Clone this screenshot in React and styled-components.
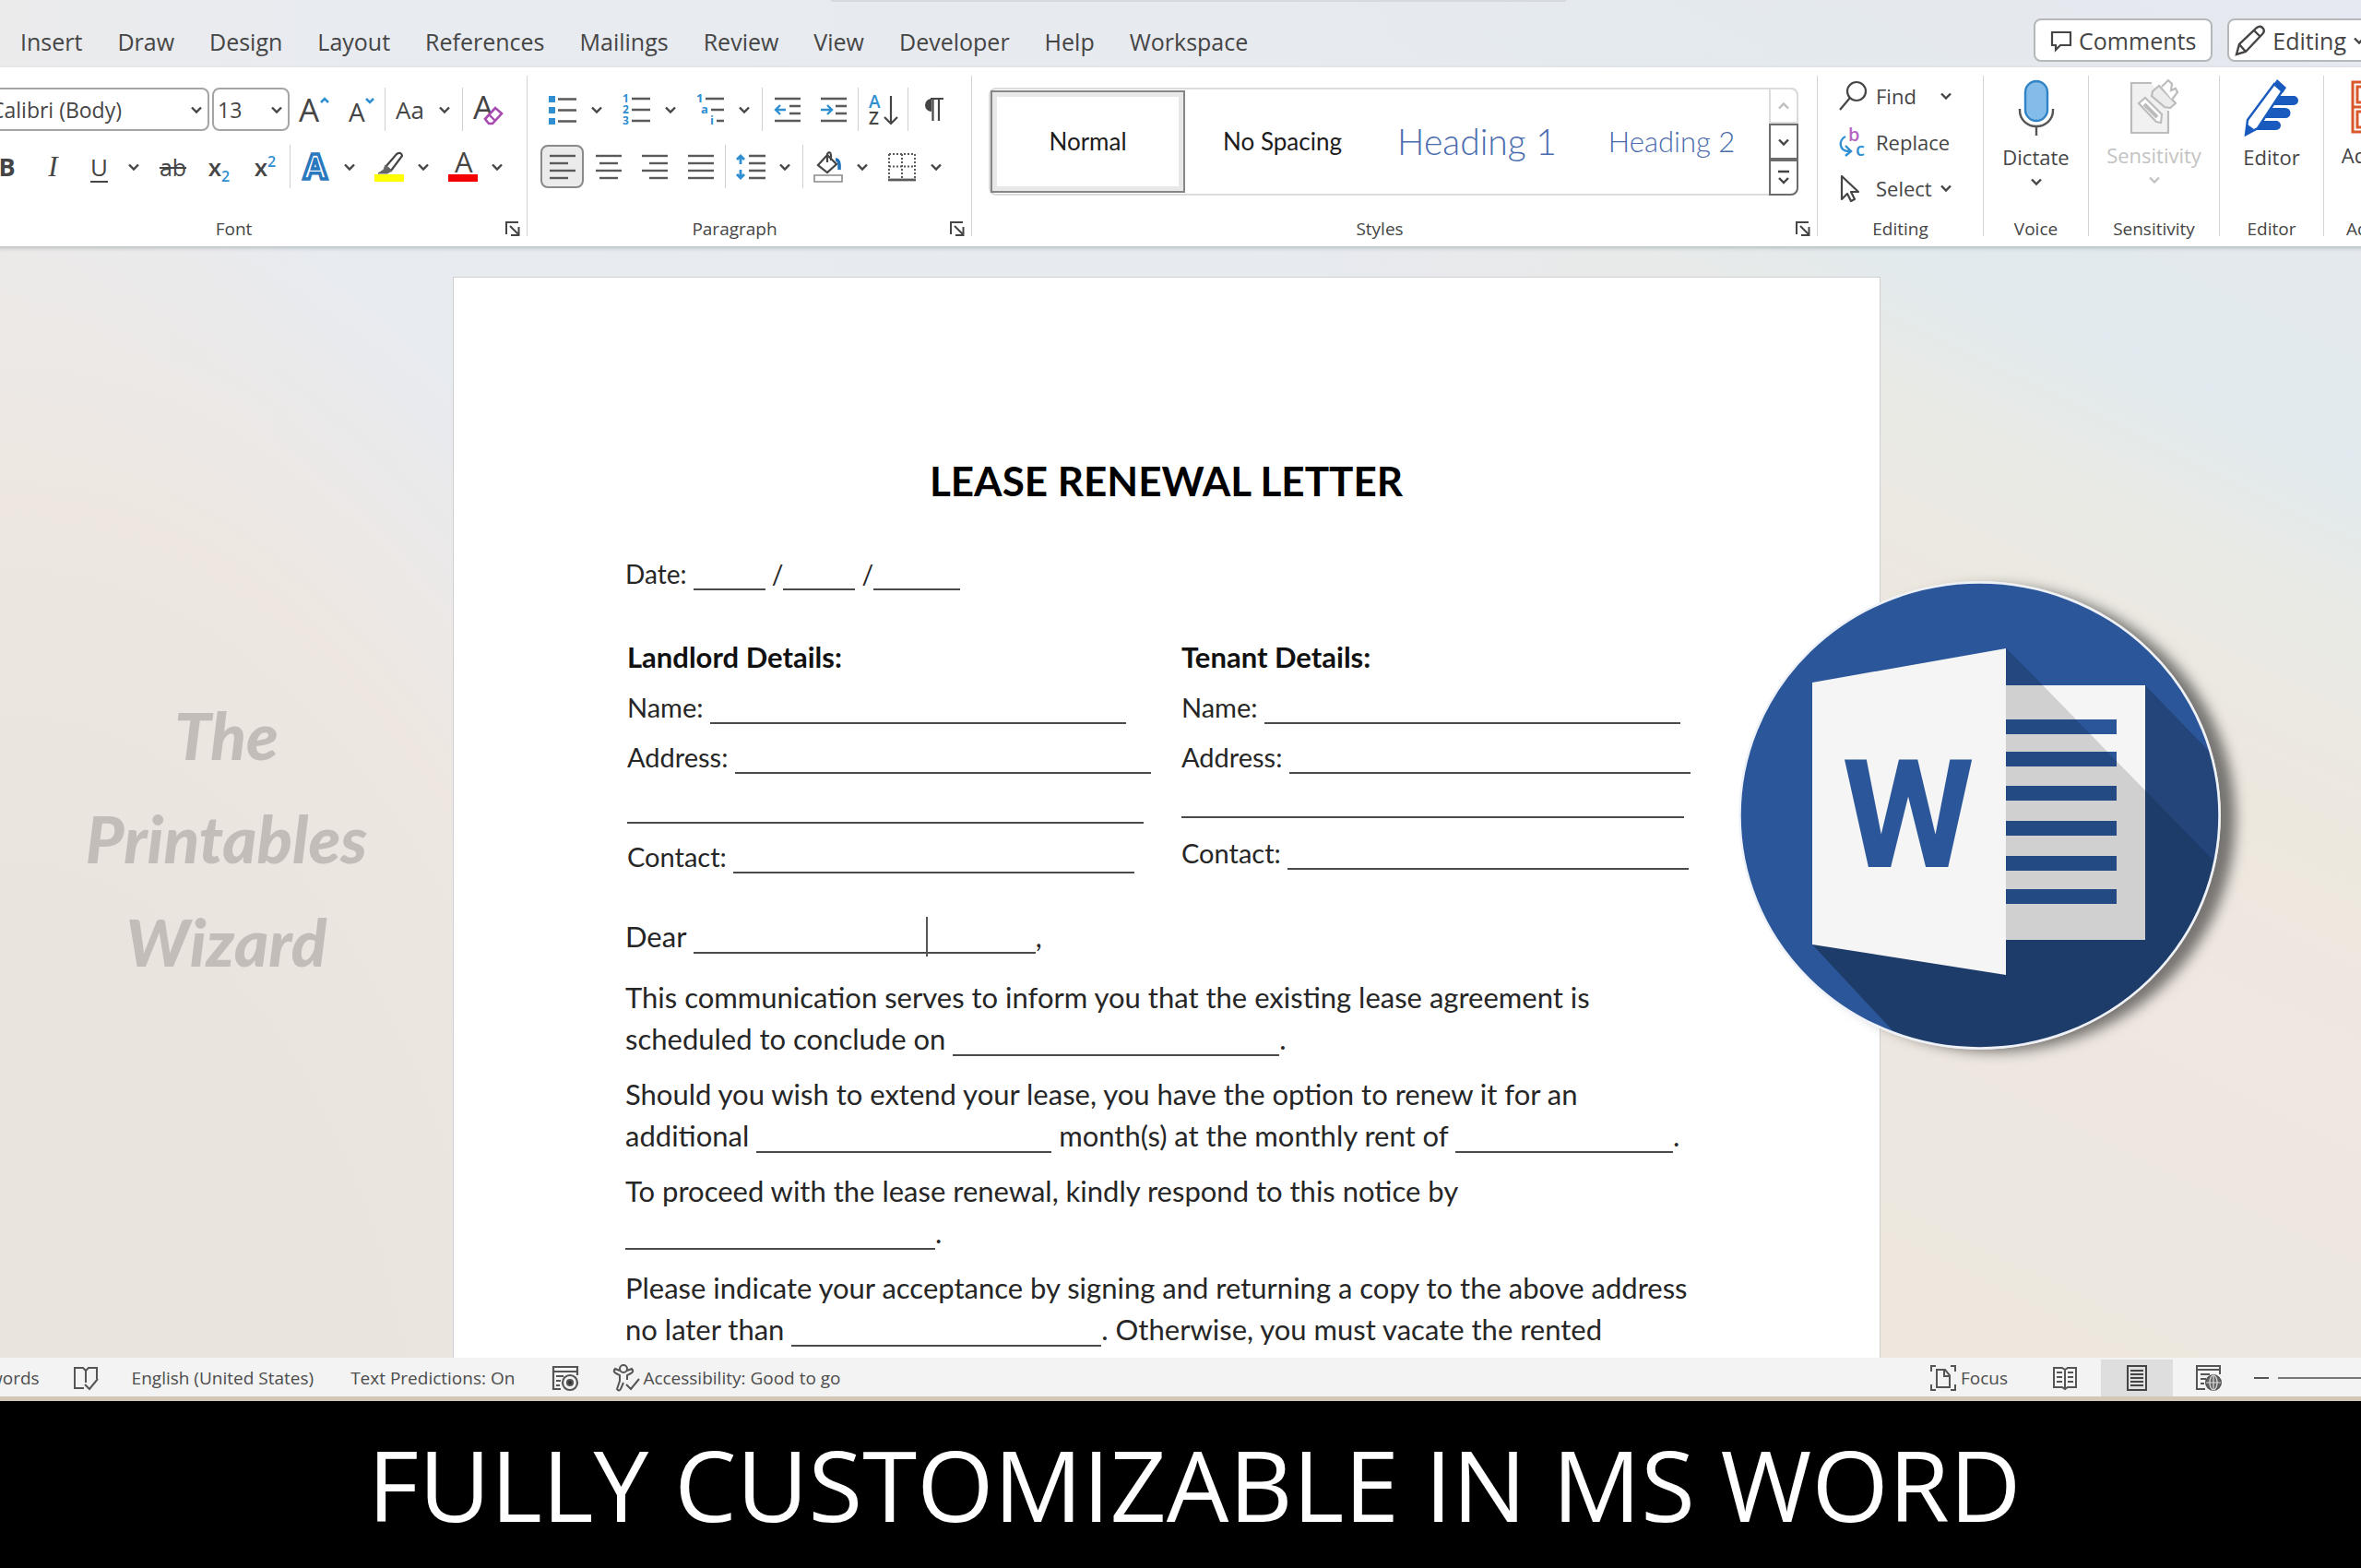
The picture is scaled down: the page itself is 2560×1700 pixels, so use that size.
import React from 'react';
import styled, { createGlobalStyle, css } from 'styled-components';

const ui = "'Open Sans', 'Noto Sans', sans-serif";
const letter = "Lato, 'Liberation Sans', sans-serif";
const ink = '#454545';
const blue = '#2f8fd0';

const GlobalStyle = createGlobalStyle`
  * { box-sizing: border-box; }
  body { margin: 0; font-family: ${ui}; color: ${ink}; }
  button, select { font: inherit; color: inherit; }
  button { background: none; border: 0; padding: 0; }
  svg { display: block; flex: none; overflow: visible; }
`;

const Shell = styled.div`
  height: 100vh;
  display: flex;
  flex-direction: column;
  overflow: hidden;
  background:
    radial-gradient(ellipse 36% 90% at 0 100%, #e9e4de 0%, #e9e4de 45%, #eee7e1 76%, rgba(236, 235, 233, 0) 100%),
    linear-gradient(90deg, #ebebec 0%, #e8ebf0 14%, #e7eaef 56%, rgba(230, 234, 239, 0) 79%),
    linear-gradient(206deg, #e6e9f1 0%, #e5e9ee 8%, #e1eaee 17%, #e9eae5 23%, #ede8df 30%, #efe7e0 41%, #ece7df 49%, #efe6dc 70%);
`;

/* tab row */

const TabBar = styled.header`
  position: relative;
  flex: none;
  height: 73px;
  display: flex;
  align-items: center;
  padding: 0 0 0 22px;
  margin-right: -13px;
  font-size: 25px;
`;

const SearchEdge = styled.div`
  position: absolute;
  top: 0;
  left: 35%;
  right: 34%;
  height: 2px;
  background: #d6dae0;
`;

const Tabs = styled.nav`
  display: flex;
  gap: 38px;
  padding-bottom: 2px;
  margin-top: 18px;
`;

const Tab = styled.button`
  line-height: 34px;
`;

const TopActions = styled.div`
  display: flex;
  gap: 16px;
  margin: 14px 0 0 auto;
`;

const ActionButton = styled.button`
  height: 47px;
  display: flex;
  align-items: center;
  gap: 7px;
  padding: 0 ${(p) => p.$pad || 16}px;
  background: #fff;
  border: 2px solid #b5b8ba;
  border-radius: 8px;
`;

/* ribbon */

const Ribbon = styled.section`
  flex: none;
  height: 194px;
  display: flex;
  margin: 0 -75px 0 -32px;
  background: #fff;
  box-shadow: 0 2px 4px rgba(90, 105, 110, 0.35);
  position: relative;
`;

const Divider = styled.div`
  flex: none;
  width: 1px;
  margin: 9px 0 11px;
  background: #d4d4d4;
`;

const Group = styled.div`
  flex: ${(p) => (p.$grow ? '1 1 0' : `0 0 ${p.$width}px`)};
  min-width: 0;
  display: flex;
  flex-direction: column;
  justify-content: space-between;
  padding: ${(p) => p.$top ?? 22}px 0 7px;
`;

const Rows = styled.div`
  display: flex;
  flex-direction: column;
  gap: 15px;
  padding-left: ${(p) => p.$left ?? 16}px;
`;

const Row = styled.div`
  display: flex;
  align-items: center;
  gap: 3px;
  height: 47px;
`;

const Footer = styled.div`
  display: flex;
  align-items: center;
  height: 24px;
  padding-right: ${(p) => (p.$launcher ? 7 : 0)}px;
  font-size: 19px;
`;

const GroupName = styled.span`
  flex: 1;
  text-align: center;
  white-space: nowrap;
`;

const Launcher = styled.button`
  padding-left: 9px;
`;

const Tool = styled.button`
  width: 47px;
  height: 47px;
  flex: none;
  display: flex;
  align-items: center;
  justify-content: center;
  border-radius: 8px;
  ${(p) =>
    p.$on &&
    css`
      background: #ebebeb;
      border: 2px solid #8a8a8a;
    `}
`;

const Split = styled.div`
  display: flex;
  align-items: center;
  margin-right: 2px;
`;

const Arrow = styled.button`
  width: 28px;
  height: 47px;
  display: flex;
  align-items: center;
  justify-content: center;
`;

const Sep = styled.div`
  width: 1px;
  height: 47px;
  background: #cfcfcf;
`;

const Combo = styled.label`
  width: ${(p) => p.$width}px;
  height: 47px;
  display: flex;
  align-items: center;
  padding: 0 5px 0 4px;
  border: 2px solid #a5a5a5;
  border-radius: 8px;
  background: #fff;
  font-size: 23px;

  select {
    flex: 1;
    min-width: 0;
    padding: 0;
    border: 0;
    background: none;
    appearance: none;
    outline: none;
  }
`;

const Glyph = styled.span`
  font-size: ${(p) => p.$size || 28}px;
  line-height: 36px;
  font-weight: ${(p) => p.$weight || 400};
  font-style: ${(p) => (p.$italic ? 'italic' : 'normal')};
  font-family: ${(p) => (p.$serif ? "'Liberation Serif', serif" : 'inherit')};
  text-decoration: ${(p) => p.$line || 'none'};
  text-decoration-thickness: 2px;
  text-underline-offset: 5px;

  sub, sup {
    font-size: 16px;
    line-height: 0;
    font-weight: 600;
    color: ${blue};
  }
`;

/* styles gallery */

const Gallery = styled.div`
  height: 117px;
  margin: 0 20px 0 18px;
  display: flex;
  border: 2px solid #dcdcdc;
  border-radius: 8px;
`;

const StyleCells = styled.div`
  flex: 1;
  display: grid;
  grid-template-columns: repeat(4, 1fr);
  padding: 1px 0;
`;

const StyleCell = styled.button`
  padding-bottom: 2px;
  font-family: ${letter};
  font-size: ${(p) => p.$size || 26}px;
  font-weight: ${(p) => p.$weight || 400};
  color: ${(p) => p.$color || '#1c1c1c'};
  white-space: nowrap;
  ${(p) =>
    p.$on &&
    css`
      border: 2px solid #868686;
      box-shadow: inset 0 0 0 5px #e8e8e8;
    `}
`;

const Scroller = styled.div`
  width: 32px;
  display: grid;
  grid-template-rows: 1fr 1fr 1fr;
  margin: -2px -2px -2px 0;
`;

const ScrollButton = styled.button`
  display: flex;
  align-items: center;
  justify-content: center;
  border: 2px solid ${(p) => (p.$off ? '#dcdcdc' : '#6c6c6c')};
  border-radius: ${(p) => (p.$last ? '0 0 8px 0' : p.$off ? '0 8px 0 0' : 0)};
  color: ${(p) => (p.$off ? '#bdbdbd' : ink)};
`;

/* editing column and the tall buttons */

const EditList = styled.div`
  display: flex;
  flex-direction: column;
  padding-left: 22px;
`;

const EditButton = styled.button`
  height: 50px;
  display: grid;
  grid-template-columns: 32px ${(p) => (p.$plain ? 'auto' : '60px')} 1fr;
  align-items: center;
  column-gap: 9px;
  font-size: 22px;
  text-align: left;
  white-space: nowrap;
`;

const TallButton = styled.button`
  display: flex;
  flex-direction: column;
  align-items: center;
  gap: 6px;
  font-size: 22px;
  line-height: 32px;
  white-space: nowrap;
  color: ${(p) => (p.$off ? '#c3c3c3' : ink)};
`;

/* document */

const Workspace = styled.main`
  position: relative;
  flex: 1;
  min-height: 0;
  display: grid;
  grid-template-columns: 491fr 1548fr 521fr;
  overflow: hidden;
`;

const Watermark = styled.aside`
  padding-top: 474px;
  text-align: center;
  font-family: ${letter};
  font-size: 71px;
  font-weight: 900;
  font-style: italic;
  line-height: 112px;
  color: #c3bdb9;
`;

const Page = styled.article`
  margin-top: 33px;
  padding: 190px 171px 0 186px;
  background: #fff;
  border: 1px solid #cfcfd2;
  font-family: ${letter};
  font-size: 31px;
  line-height: 45px;
  color: #262626;
  white-space: nowrap;
`;

const Title = styled.h1`
  margin: 0 16px 49px 0;
  font-size: 44px;
  line-height: 60px;
  text-align: center;
  color: #000;
`;

const DateLine = styled.p`
  margin: 0;
  font-size: 28px;
`;

const Details = styled.div`
  display: grid;
  grid-template-columns: 1fr 1fr;
  margin: 40px -15px 37px 2px;
  font-size: 29px;
  line-height: 54px;
`;

const DetailTitle = styled.h2`
  margin: 0 0 1px;
  font-size: 31px;
  color: #111;
`;

const DetailRow = styled.div`
  height: ${(p) => (p.$short ? 50 : 54)}px;
  line-height: ${(p) => (p.$short ? 42 : 54)}px;
`;

const Paragraph = styled.p`
  margin: 0 0 ${(p) => p.$after ?? 15}px;
`;

const Blank = styled.span`
  display: inline-block;
  position: relative;
  width: ${(p) => p.$width}px;
  height: 28px;
  vertical-align: -7px;
  border-bottom: 2px solid #4a4a4a;
`;

const Caret = styled.span`
  position: absolute;
  left: 68%;
  top: -12px;
  width: 2px;
  height: 43px;
  background: #555;
`;

const WordBadge = styled.div`
  position: absolute;
  top: 363px;
  right: 152px;
  border-radius: 50%;
  box-shadow: 18px 4px 14px -2px rgba(40, 40, 40, 0.6);
`;

/* status bar and caption */

const StatusBar = styled.footer`
  flex: none;
  height: 42px;
  display: flex;
  align-items: center;
  padding-top: 2px;
  background: #f3f3f3;
  font-size: 19px;
  color: #4c4c4c;
  overflow: hidden;
  white-space: nowrap;
`;

const StatusItem = styled.button`
  display: flex;
  align-items: center;
  gap: ${(p) => p.$gap || 0}px;
  margin-left: ${(p) => p.$before || 40}px;
`;

const StatusRight = styled.div`
  display: flex;
  align-items: center;
  height: 100%;
  margin-left: auto;
`;

const ViewButton = styled.button`
  width: 78px;
  height: 100%;
  display: flex;
  align-items: center;
  justify-content: center;
  background: ${(p) => (p.$on ? '#dedede' : 'none')};
`;

const Views = styled.div`
  display: flex;
  height: 100%;
  margin-left: 23px;
`;

const Zoom = styled.div`
  display: flex;
  align-items: center;
  gap: 10px;
  margin-left: 10px;
`;

const ZoomTrack = styled.div`
  width: 90px;
  height: 2px;
  background: #777;
`;

const Caption = styled.div`
  flex: none;
  height: 186px;
  border-top: 5px solid #d3c7b6;
  padding-left: 30px;
  background: #000;
  color: #fff;
  font-family: ${ui};
  font-size: 107px;
  line-height: 179px;
  text-align: center;
  white-space: nowrap;
`;

/* icons */

const Chevron = ({ up }) => (
  <svg width="14" height="10" viewBox="0 0 14 10" fill="none" stroke="currentColor" strokeWidth="2.4">
    <path d={up ? 'M2 7.5 7 2.5l5 5' : 'M2 2.5l5 5 5-5'} />
  </svg>
);

const LauncherIcon = () => (
  <svg width="16" height="16" viewBox="0 0 16 16" fill="none" stroke={ink} strokeWidth="2">
    <path d="M1 14V1h13M5 5l9 9M14.500 6v9H6" />
  </svg>
);

const Lines = ({ rows }) => (
  <svg width="28" height="30" viewBox="0 0 28 30" stroke="#5a5a5a" strokeWidth="2.4">
    {rows.map(([a, b], i) => (
      <path key={i} d={`M${a} ${3 + i * 8}H${b}`} />
    ))}
  </svg>
);

const BulletsIcon = () => (
  <svg width="32" height="32" viewBox="0 0 32 32">
    <path d="M1 1h7v7H1zM1 13h7v7H1zM1 25h7v7H1z" fill={blue} />
    <path d="M11 4.500h20M11 16.500h20M11 28.500h20" stroke="#5a5a5a" strokeWidth="2.4" />
  </svg>
);

const NumbersIcon = () => (
  <svg width="32" height="34" viewBox="0 0 32 34" fontFamily="Open Sans" fontSize="12" fontWeight="700">
    <g fill={blue}>
      <text x="1" y="9">1</text>
      <text x="1" y="21">2</text>
      <text x="1" y="33">3</text>
    </g>
    <path d="M11 5h20M11 17h20M11 29h20" stroke="#5a5a5a" strokeWidth="2.400" />
  </svg>
);

const MultiIcon = () => (
  <svg width="32" height="34" viewBox="0 0 32 34" fontFamily="Open Sans" fontSize="13" fontWeight="700">
    <g fill={blue}>
      <text x="1" y="9">1</text>
      <text x="6" y="21">a</text>
      <text x="16" y="33">i</text>
    </g>
    <path d="M11 5h20M17 17h14M23 29h8" stroke="#5a5a5a" strokeWidth="2.400" />
  </svg>
);

const IndentIcon = ({ right }) => (
  <svg width="30" height="30" viewBox="0 0 30 30" fill="none" stroke="#5a5a5a" strokeWidth="2.400">
    <path d="M1 3h28M17 11h12M17 19h12M1 27h28" />
    <path d={right ? 'M1 15h11M8 10l5 5-5 5' : 'M2 15h11M7 10l-5 5 5 5'} stroke={blue} />
  </svg>
);

const SortIcon = () => (
  <svg width="34" height="36" viewBox="0 0 34 36" fontFamily="Open Sans" fontSize="19" fontWeight="600">
    <text x="1" y="16" fill={blue}>A</text>
    <text x="1" y="34" fill={ink}>Z</text>
    <path d="M25 3v29M18 26l7 7 7-7" fill="none" stroke={ink} strokeWidth="2.200" />
  </svg>
);

const PilcrowIcon = () => (
  <svg width="24" height="28" viewBox="0 0 24 28" fill={ink}>
    <path d="M10 2a7 7 0 0 0 0 14z" />
    <path d="M9 2h14M11.500 2v24M18 2v24" fill="none" stroke={ink} strokeWidth="2.200" />
  </svg>
);

const SpacingIcon = () => (
  <svg width="34" height="30" viewBox="0 0 34 30" fill="none" strokeWidth="2.400">
    <path d="M15 3h18M15 11h18M15 19h18M15 27h18" stroke="#5a5a5a" />
    <path d="M6 3v9M2 7l4-4 4 4M6 18v9M2 23l4 4 4-4" stroke={blue} strokeWidth="2.800" />
  </svg>
);

const BucketIcon = () => (
  <svg width="34" height="34" viewBox="0 0 34 34" fill="none" stroke={ink} strokeWidth="2.200">
    <path d="M6 15 16 4l10 10-10 9zM16 12V3q3-4 4 1v6" />
    <path d="M25 9q5 0 4 11" stroke="#1f6fb5" strokeWidth="3.500" />
    <path d="M2 26h30v7H2z" stroke="#8a8a8a" strokeWidth="1.600" />
  </svg>
);

const BordersIcon = () => (
  <svg width="32" height="32" viewBox="0 0 32 32" fill="none" stroke="#5a5a5a" strokeWidth="2">
    <path d="M2 2h28v27M2 2v27M16 2v27M2 15.500h28" strokeDasharray="2 2" />
    <path d="M1 30h30" strokeWidth="2.800" />
  </svg>
);

const SizeIcon = ({ down }) => (
  <svg width="34" height="34" viewBox="0 0 34 34" fontFamily="Open Sans" fill={ink}>
    <text x={down ? 4 : 0} y="30" fontSize={down ? 28 : 35}>A</text>
    <path d={down ? 'M23 5l4 4 4-4' : 'M24 9l4-4 4 4'} fill="none" stroke={blue} strokeWidth="2.600" />
  </svg>
);

const ClearIcon = () => (
  <svg width="34" height="36" viewBox="0 0 34 36" fontFamily="Open Sans">
    <text x="1" y="28" fontSize="35" fill={ink}>A</text>
    <path d="M14 28 25 16l7 6-10 11h-4z" fill="#fff" stroke="#a849b0" strokeWidth="2.600" />
    <path d="M18 23l7 7" stroke="#a849b0" strokeWidth="2.400" />
  </svg>
);

const EffectsIcon = () => (
  <svg width="36" height="36" viewBox="0 0 36 36" fontFamily="Open Sans" fontSize="37" fontWeight="700">
    <text x="5" y="31" fill="#fff" stroke="#2a78bd" strokeWidth="3.400">A</text>
  </svg>
);

const HighlightIcon = () => (
  <svg width="34" height="34" viewBox="0 0 34 34" fill="none" stroke={ink} strokeWidth="2.200">
    <path d="M13 17 25 3q5-3 6 2L19 21z" />
    <path d="M13 15l-2 5-6 4h10l5-3z" fill="#666" stroke="#666" strokeWidth="1" />
    <path d="M1 25h32v8H1z" fill="#ffff00" stroke="none" />
  </svg>
);

const ColorIcon = () => (
  <svg width="34" height="34" viewBox="0 0 34 34" fontFamily="Open Sans" fontSize="31">
    <text x="8" y="23" fill={ink}>A</text>
    <path d="M1 25h32v8H1z" fill="#f40000" />
  </svg>
);

const FindIcon = () => (
  <svg width="32" height="34" viewBox="0 0 32 34" fill="none" stroke={ink} strokeWidth="2.200">
    <circle cx="20" cy="12" r="10" />
    <path d="M13 19 2 32" />
  </svg>
);

const ReplaceIcon = () => (
  <svg width="30" height="34" viewBox="0 0 30 34" fontFamily="Open Sans" fontSize="20" fontWeight="600">
    <text x="11" y="16" fill="#b765c4">b</text>
    <text x="19" y="32" fill={blue}>c</text>
    <path d="M8 11C0 15 1 27 12 27M8 21l6 6-6 5" fill="none" stroke={blue} strokeWidth="2.400" />
  </svg>
);

const SelectIcon = () => (
  <svg width="26" height="34" viewBox="0 0 26 34" fill="none" stroke={ink} strokeWidth="2.200">
    <path d="M4 4v25l6-6 4 8 4-2-4-8h8z" strokeLinejoin="round" />
  </svg>
);

const MicIcon = () => (
  <svg width="40" height="62" viewBox="0 0 40 62" fill="none" stroke="#555" strokeWidth="2.400">
    <rect x="8" y="2" width="24" height="43" rx="12" fill="#83bce9" stroke="#2f83c6" />
    <path d="M2 32v2a18 17 0 0 0 36 0v-2M20 51v10" />
  </svg>
);

const SensitivityIcon = () => (
  <svg width="54" height="60" viewBox="0 0 54 60" fill="#ececec" stroke="#bcbcbc" strokeWidth="2.200">
    <path d="M24 4H2v54h40V34" fill="#f1f1f1" />
    <path d="M10 26l7-6 18 18-1 9-5-1z" fill="#fff" />
    <path d="M16 27l14 14" strokeWidth="4" />
    <path d="M25 13l7-6 18 19-6 5-6-1-14-12z" />
    <path d="M35 8l7-7 4 4-1 7 5-2 2 4-6 8" fill="#fff" />
  </svg>
);

const EditorIcon = () => (
  <svg width="62" height="62" viewBox="0 0 62 62">
    <path d="M33 18h22a5 5 0 0 1 0 10H28zM27 31h19a5 5 0 0 1 0 11H20zM19 45h17a5 5 0 0 1 0 10H8z" fill="#185abd" />
    <path d="M5 44 34 5l9 7-27 41L3 60z" fill="#fff" stroke="#185abd" strokeWidth="2.400" />
    <path d="M37 0l10 9-4 6-10-9z" fill="#185abd" />
    <path d="M2 61l3-12 7 5z" fill="#185abd" />
  </svg>
);

const AddinsIcon = () => (
  <svg width="58" height="60" viewBox="0 0 58 60" fill="none" stroke="#d9592b" strokeWidth="3">
    <path d="M2 3h24v54H2zM2 30h52v27H2zM7 8h14v17H7zM7 35h14v17H7zM32 14l12-12 12 12-12 12z" />
  </svg>
);

const CommentIcon = () => (
  <svg width="24" height="22" viewBox="0 0 24 22" fill="none" stroke={ink} strokeWidth="2.200">
    <path d="M2 2h20v14H11l-5 5v-5H2z" />
  </svg>
);

const PencilIcon = () => (
  <svg width="34" height="34" viewBox="0 0 34 34" fill="none" stroke={ink} strokeWidth="2.400">
    <path d="M2 32l3-11L24 3q4-3 7 1 2 3-1 6L12 29zM5 21l7 8M21 6l7 7" />
  </svg>
);

const ProofIcon = () => (
  <svg width="28" height="28" viewBox="0 0 28 28" fill="none" stroke="#555" strokeWidth="2">
    <path d="M12 25H2V3h9l3 3 3-3h9v12M14 5v14M13 21l5 5 9-11" />
  </svg>
);

const MacroIcon = () => (
  <svg width="30" height="28" viewBox="0 0 30 28" fill="none" stroke="#555" strokeWidth="2.200">
    <path d="M10 26H2V2h26v9M2 7h26M5 12h8M5 17h5M5 22h4" />
    <circle cx="20" cy="19" r="8" />
    <circle cx="20" cy="19" r="3" fill="#333" />
  </svg>
);

const AccessIcon = () => (
  <svg width="30" height="30" viewBox="0 0 30 30" fill="none" stroke="#555" strokeWidth="2">
    <circle cx="12" cy="5" r="4" />
    <path d="M8 7 3 5q-3 3 1 5l4 2v6L5 27q2 3 4 0l3-7M16 7l5-2q3 3-1 5l-4 2v5M15 22l5 5 9-11" />
  </svg>
);

const FocusIcon = () => (
  <svg width="28" height="30" viewBox="0 0 28 30" fill="none" stroke="#555" strokeWidth="2">
    <path d="M1 8V2h5M22 2h5v6M1 22v6h5M22 28h5v-6M7 6h9l5 6v13H7zM15 6v7h6" />
  </svg>
);

const ReadIcon = () => (
  <svg width="28" height="28" viewBox="0 0 28 28" fill="none" stroke="#555" strokeWidth="2">
    <path d="M2 3h9l3 2 3-2h9v21h-9l-3 2-3-2H2zM14 4v23M5 8h6M5 13h6M5 18h6M17 8h6M17 13h6M17 18h6" />
  </svg>
);

const PrintIcon = () => (
  <svg width="24" height="30" viewBox="0 0 24 30" fill="none" stroke="#444" strokeWidth="2">
    <path d="M2 2h20v26H2zM5 7h14M5 11h14M5 15h14M5 19h14M5 23h14" />
  </svg>
);

const WebIcon = () => (
  <svg width="30" height="30" viewBox="0 0 30 30" fill="none" stroke="#555" strokeWidth="2">
    <path d="M11 27H2V2h25v9M2 6h25M6 11h10M6 16h6M6 21h4" />
    <circle cx="20" cy="20" r="8" fill="#666" />
    <path d="M20 12v16M12 20h16" stroke="#ddd" strokeWidth="1.200" />
    <ellipse cx="20" cy="20" rx="4" ry="8" stroke="#ddd" strokeWidth="1.200" />
  </svg>
);

const WordLogo = () => (
  <svg width="523" height="508" viewBox="0 0 523 508">
    <defs>
      <clipPath id="disc">
        <ellipse cx="261.500" cy="254" rx="260" ry="252.500" />
      </clipPath>
      <clipPath id="sheet">
        <path d="M290 113h151v276H290z" />
      </clipPath>
    </defs>
    <g clipPath="url(#disc)">
      <path d="M0 0h523v508H0z" fill="#2b579a" />
      <path d="M441 113 600 277v300H441z" fill="#234579" />
      <path d="M290 73 330 113 516 304 600 393v180H247L80 394z" fill="#1e3c69" />
      <path d="M290 73l40 40h-40z" fill="#24477f" />
      <path d="M290 113h151v276H290z" fill="#f5f5f5" />
      <g fill="#2b579a">
        {[150, 185, 222, 260, 298, 334].map((y) => (
          <path key={y} d={`M290 ${y}h120v16H290z`} />
        ))}
      </g>
      <path d="M290 73 330 113 441 227 520 310v190H290z" fill="#000" opacity="0.15" clipPath="url(#sheet)" />
      <path d="M80 110 290 73v354L80 394z" fill="#f5f5f5" />
      <text
        x="184"
        y="310"
        textAnchor="middle"
        fontFamily="Roboto, sans-serif"
        fontSize="164"
        fontWeight="700"
        fill="#2b579a"
      >
        W
      </text>
    </g>
    <ellipse cx="261.500" cy="254" rx="260" ry="252.500" fill="none" stroke="#eef2f8" strokeWidth="2.500" />
  </svg>
);

const TABS = ['Insert', 'Draw', 'Design', 'Layout', 'References', 'Mailings', 'Review', 'View', 'Developer', 'Help', 'Workspace'];

const SplitTool = ({ label, children }) => (
  <Split>
    <Tool aria-label={label}>{children}</Tool>
    <Arrow aria-label={`${label} options`}>
      <Chevron />
    </Arrow>
  </Split>
);

const GroupFooter = ({ name, launcher }) => (
  <Footer $launcher={launcher}>
    <GroupName>{name}</GroupName>
    {launcher && (
      <Launcher aria-label={`${name} settings`}>
        <LauncherIcon />
      </Launcher>
    )}
  </Footer>
);

const FontGroup = () => (
  <Group $width={603}>
    <Rows>
      <Row>
        <Combo $width={243}>
          <select aria-label="Font" defaultValue="Calibri (Body)">
            <option>Calibri (Body)</option>
          </select>
          <Chevron />
        </Combo>
        <Combo $width={84}>
          <select aria-label="Font size" defaultValue="13">
            <option>13</option>
          </select>
          <Chevron />
        </Combo>
        <Tool aria-label="Grow font"><SizeIcon /></Tool>
        <Tool aria-label="Shrink font"><SizeIcon down /></Tool>
        <Sep />
        <SplitTool label="Change case"><Glyph $size={26}>Aa</Glyph></SplitTool>
        <Sep />
        <Tool aria-label="Clear formatting"><ClearIcon /></Tool>
      </Row>
      <Row>
        <Tool aria-label="Bold"><Glyph $weight={700} $size={27}>B</Glyph></Tool>
        <Tool aria-label="Italic"><Glyph $serif $italic $size={31}>I</Glyph></Tool>
        <SplitTool label="Underline"><Glyph $line="underline" $size={26}>U</Glyph></SplitTool>
        <Tool aria-label="Strikethrough"><Glyph $line="line-through" $size={25}>ab</Glyph></Tool>
        <Tool aria-label="Subscript"><Glyph $weight={600} $size={26}>x<sub>2</sub></Glyph></Tool>
        <Tool aria-label="Superscript"><Glyph $weight={600} $size={26}>x<sup>2</sup></Glyph></Tool>
        <Sep />
        <SplitTool label="Text effects"><EffectsIcon /></SplitTool>
        <SplitTool label="Highlight"><HighlightIcon /></SplitTool>
        <SplitTool label="Font color"><ColorIcon /></SplitTool>
      </Row>
    </Rows>
    <GroupFooter name="Font" launcher />
  </Group>
);

const ParagraphGroup = () => (
  <Group $width={481}>
    <Rows $left={14}>
      <Row>
        <SplitTool label="Bullets"><BulletsIcon /></SplitTool>
        <SplitTool label="Numbering"><NumbersIcon /></SplitTool>
        <SplitTool label="Multilevel list"><MultiIcon /></SplitTool>
        <Sep />
        <Tool aria-label="Decrease indent"><IndentIcon /></Tool>
        <Tool aria-label="Increase indent"><IndentIcon right /></Tool>
        <Sep />
        <Tool aria-label="Sort"><SortIcon /></Tool>
        <Sep />
        <Tool aria-label="Show marks"><PilcrowIcon /></Tool>
      </Row>
      <Row>
        <Tool $on aria-label="Align left"><Lines rows={[[0, 28], [0, 20], [0, 28], [0, 20]]} /></Tool>
        <Tool aria-label="Center"><Lines rows={[[0, 28], [4, 24], [0, 28], [4, 24]]} /></Tool>
        <Tool aria-label="Align right"><Lines rows={[[0, 28], [8, 28], [0, 28], [8, 28]]} /></Tool>
        <Tool aria-label="Justify"><Lines rows={[[0, 28], [0, 28], [0, 28], [0, 28]]} /></Tool>
        <Sep />
        <SplitTool label="Line spacing"><SpacingIcon /></SplitTool>
        <Sep />
        <SplitTool label="Shading"><BucketIcon /></SplitTool>
        <SplitTool label="Borders"><BordersIcon /></SplitTool>
      </Row>
    </Rows>
    <GroupFooter name="Paragraph" launcher />
  </Group>
);

const StylesGroup = () => (
  <Group $grow>
    <Gallery>
      <StyleCells>
        <StyleCell $on>Normal</StyleCell>
        <StyleCell>No Spacing</StyleCell>
        <StyleCell $size={39} $weight={300} $color="#4a6cae">Heading 1</StyleCell>
        <StyleCell $size={31} $weight={300} $color="#4a6cae">Heading 2</StyleCell>
      </StyleCells>
      <Scroller>
        <ScrollButton $off aria-label="Previous styles"><Chevron up /></ScrollButton>
        <ScrollButton aria-label="Next styles"><Chevron /></ScrollButton>
        <ScrollButton $last aria-label="More styles">
          <svg width="14" height="18" viewBox="0 0 14 18" fill="none" stroke="currentColor" strokeWidth="2.400">
            <path d="M1 2h12M2 9l5 5 5-5" />
          </svg>
        </ScrollButton>
      </Scroller>
    </Gallery>
    <GroupFooter name="Styles" launcher />
  </Group>
);

const Blanks = ({ address, last, short }) => (
  <>
    <DetailRow>Name: <Blank $width={451} /></DetailRow>
    <DetailRow>Address: <Blank $width={address} /></DetailRow>
    <DetailRow $short={short}><Blank $width={last} /></DetailRow>
    <DetailRow>Contact: <Blank $width={435} /></DetailRow>
  </>
);

const Letter = () => (
  <Page>
    <Title>LEASE RENEWAL LETTER</Title>
    <DateLine>
      Date: <Blank $width={78} /> /<Blank $width={78} /> /<Blank $width={94} />
    </DateLine>
    <Details>
      <div>
        <DetailTitle>Landlord Details:</DetailTitle>
        <Blanks address={451} last={560} />
      </div>
      <div>
        <DetailTitle>Tenant Details:</DetailTitle>
        <Blanks address={435} last={545} short />
      </div>
    </Details>
    <Paragraph $after={21}>
      Dear <Blank $width={371}><Caret /></Blank>,
    </Paragraph>
    <Paragraph>
      This communication serves to inform you that the existing lease agreement is
      <br />
      scheduled to conclude on <Blank $width={354} />.
    </Paragraph>
    <Paragraph>
      Should you wish to extend your lease, you have the option to renew it for an
      <br />
      additional <Blank $width={320} /> month(s) at the monthly rent of <Blank $width={236} />.
    </Paragraph>
    <Paragraph>
      To proceed with the lease renewal, kindly respond to this notice by
      <br />
      <Blank $width={336} />.
    </Paragraph>
    <Paragraph>
      Please indicate your acceptance by signing and returning a copy to the above address
      <br />
      no later than <Blank $width={336} />. Otherwise, you must vacate the rented
    </Paragraph>
  </Page>
);

const App = () => {
  return (
    <Shell>
      <GlobalStyle />
      <TabBar>
        <SearchEdge />
        <Tabs>
          {TABS.map((name) => (
            <Tab key={name}>{name}</Tab>
          ))}
        </Tabs>
        <TopActions>
          <ActionButton><CommentIcon />Comments</ActionButton>
          <ActionButton $pad={6}><PencilIcon />Editing<Chevron /></ActionButton>
        </TopActions>
      </TabBar>

      <Ribbon>
        <FontGroup />
        <Divider />
        <ParagraphGroup />
        <Divider />
        <StylesGroup />
        <Divider />
        <Group $width={179} $top={6}>
          <EditList>
            <EditButton><FindIcon />Find<Chevron /></EditButton>
            <EditButton $plain><ReplaceIcon />Replace</EditButton>
            <EditButton><SelectIcon />Select<Chevron /></EditButton>
          </EditList>
          <GroupFooter name="Editing" />
        </Group>
        <Divider />
        <Group $width={113} $top={13}>
          <TallButton><MicIcon />Dictate<Chevron /></TallButton>
          <GroupFooter name="Voice" />
        </Group>
        <Divider />
        <Group $width={141} $top={13}>
          <TallButton $off><SensitivityIcon />Sensitivity<Chevron /></TallButton>
          <GroupFooter name="Sensitivity" />
        </Group>
        <Divider />
        <Group $width={112} $top={13}>
          <TallButton><EditorIcon />Editor</TallButton>
          <GroupFooter name="Editor" />
        </Group>
        <Divider />
        <Group $width={115} $top={13}>
          <TallButton><AddinsIcon />Add-ins</TallButton>
          <GroupFooter name="Add-ins" />
        </Group>
      </Ribbon>

      <Workspace>
        <Watermark>
          The
          <br />
          Printables
          <br />
          Wizard
        </Watermark>
        <Letter />
        <WordBadge>
          <WordLogo />
        </WordBadge>
      </Workspace>

      <StatusBar>
        <StatusItem $before={-12}>words</StatusItem>
        <StatusItem aria-label="Proofing" $before={36}><ProofIcon /></StatusItem>
        <StatusItem $before={36}>English (United States)</StatusItem>
        <StatusItem>Text Predictions: On</StatusItem>
        <StatusItem aria-label="Macros"><MacroIcon /></StatusItem>
        <StatusItem $gap={3} $before={36}><AccessIcon />Accessibility: Good to go</StatusItem>
        <StatusRight>
          <StatusItem $gap={5}><FocusIcon />Focus</StatusItem>
          <Views>
            <ViewButton aria-label="Read mode"><ReadIcon /></ViewButton>
            <ViewButton $on aria-label="Print layout"><PrintIcon /></ViewButton>
            <ViewButton aria-label="Web layout"><WebIcon /></ViewButton>
          </Views>
          <Zoom>
            <svg width="16" height="2"><path d="M0 1h16" stroke="#555" strokeWidth="2" /></svg>
            <ZoomTrack />
          </Zoom>
        </StatusRight>
      </StatusBar>
      <Caption>FULLY CUSTOMIZABLE IN MS WORD</Caption>
    </Shell>
  );
};

export default App;
